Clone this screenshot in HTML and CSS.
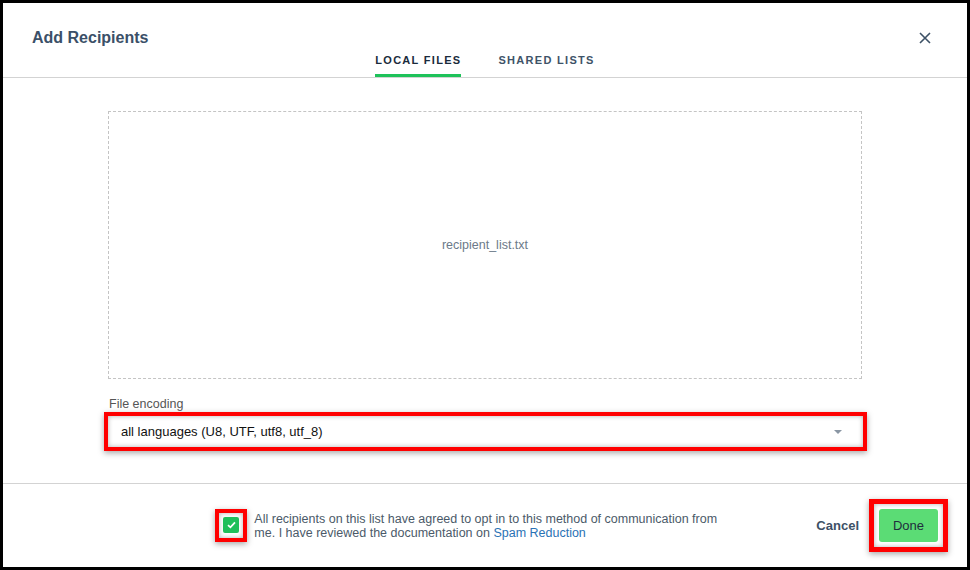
FILE: index.html
```html
<!DOCTYPE html>
<html lang="en">
<head>
    <meta charset="UTF-8">
    <meta name="viewport" content="width=device-width, initial-scale=1.0">
    <title>Add Recipients</title>
    <link rel="stylesheet" href="styles.css">
</head>
<body>
    <div class="modal">
      <div class="modalHeader">
        <div class="titleRow">
          <h1 class="title">Add Recipients</h1>
          <button class="closeBtn" aria-label="Close">
            <svg width="12" height="12" viewBox="0 0 12 12"><path d="M1 1L11 11M11 1L1 11" stroke="#3d5166" stroke-width="1.6" fill="none"/></svg>
          </button>
        </div>
        <div class="tabs">
          <div class="tab active">LOCAL FILES</div>
          <div class="tab">SHARED LISTS</div>
        </div>
      </div>

      <div class="modalBody">
        <div class="dropZone">recipient_list.txt</div>
        <div class="fieldLabel">File encoding</div>
        <div class="callout selectCallout">
          <div class="select">
            <span>all languages (U8, UTF, utf8, utf_8)</span>
            <span class="caret"></span>
          </div>
        </div>
      </div>

      <div class="modalFooter">
        <div class="agree">
          <div class="callout checkCallout">
            <div class="checkbox">
              <svg width="9" height="8" viewBox="0 0 9 8"><path d="M1 4.2L3.4 6.4L8 1.4" stroke="#fff" stroke-width="1.7" fill="none"/></svg>
            </div>
          </div>
          <p class="agreeText">All recipients on this list have agreed to opt in to this method of communication from me. I have reviewed the documentation on <a href="#">Spam Reduction</a></p>
        </div>
        <button class="cancelBtn">Cancel</button>
        <div class="callout doneCallout">
          <button class="doneBtn">Done</button>
        </div>
      </div>
    </div>
</body>
</html>
```

FILE: styles.css
```css
body {
    margin: 0;
    padding: 3px;
    background-color: #000;
    font-family: "Liberation Sans", Arial, sans-serif;
}
.modal {
    width: 964px;
    height: 564px;
    background-color: #fff;
    display: flex;
    flex-direction: column;
}
.modalHeader {
    padding: 25px 36px 0 29px;
    border-bottom: 1px solid #d3d3d3;
}
.titleRow {
    display: flex;
    justify-content: space-between;
    align-items: center;
    height: 20px;
}
.title {
    margin: 0;
    font-size: 16px;
    line-height: 20px;
    font-weight: bold;
    color: #3b5068;
}
.closeBtn {
    border: none;
    background: none;
    padding: 0;
    width: 12px;
    height: 12px;
    display: flex;
}
.tabs {
    display: flex;
    justify-content: center;
    gap: 37px;
    margin-top: 5px;
    padding-left: 7px;
}
.tab {
    font-size: 11px;
    line-height: 14px;
    font-weight: bold;
    letter-spacing: 1.3px;
    color: #3e5368;
    padding-bottom: 7px;
    border-bottom: 3px solid transparent;
}
.tab.active {
    color: #1a2b3c;
    border-bottom-color: #1ec25a;
}
.modalBody {
    padding: 33px 105px 32px;
}
.dropZone {
    height: 266px;
    border: 1px dashed #c4c4c4;
    display: flex;
    align-items: center;
    justify-content: center;
    font-size: 12.5px;
    color: #6c7a89;
}
.fieldLabel {
    margin-top: 17px;
    padding-left: 1px;
    font-size: 12.5px;
    line-height: 16px;
    color: #555;
}
.callout {
    border: 4px solid #ff0000;
    box-shadow: 0 2px 6px rgba(0, 0, 0, 0.35), inset 0 0 5px rgba(0, 0, 0, 0.3);
}
.selectCallout {
    margin: 0 -5px 0 -4px;
}
.select {
    height: 31px;
    padding: 0 21px 0 13px;
    display: flex;
    align-items: center;
    justify-content: space-between;
    font-size: 13px;
    color: #111;
}
.caret {
    width: 0;
    height: 0;
    border-left: 4px solid transparent;
    border-right: 4px solid transparent;
    border-top: 4px solid #8a96a3;
}
.modalFooter {
    flex: 1;
    border-top: 1px solid #d3d3d3;
    display: flex;
    align-items: center;
    justify-content: flex-end;
    padding-right: 19px;
}
.agree {
    display: flex;
    align-items: center;
    gap: 7px;
    margin-right: 92px;
}
.checkCallout {
    padding: 4px 4px 5px;
}
.checkbox {
    width: 16px;
    height: 16px;
    background-color: #1fbf5a;
    border-radius: 2px;
    display: flex;
    align-items: center;
    justify-content: center;
}
.agreeText {
    width: 470px;
    margin: 0;
    font-size: 12.5px;
    line-height: 14px;
    color: #4b5a69;
}
.agreeText a {
    color: #2a72b5;
    text-decoration: none;
}
.cancelBtn {
    border: none;
    background: none;
    padding: 0;
    margin-right: 10px;
    font-family: inherit;
    font-size: 13px;
    font-weight: bold;
    color: #3d5166;
}
.doneCallout {
    padding: 5px;
    border-width: 5px;
}
.doneBtn {
    width: 59px;
    height: 33px;
    border: none;
    border-radius: 3px;
    background-color: #5bdc75;
    font-family: inherit;
    font-size: 13px;
    color: #1f2e3d;
}
```
